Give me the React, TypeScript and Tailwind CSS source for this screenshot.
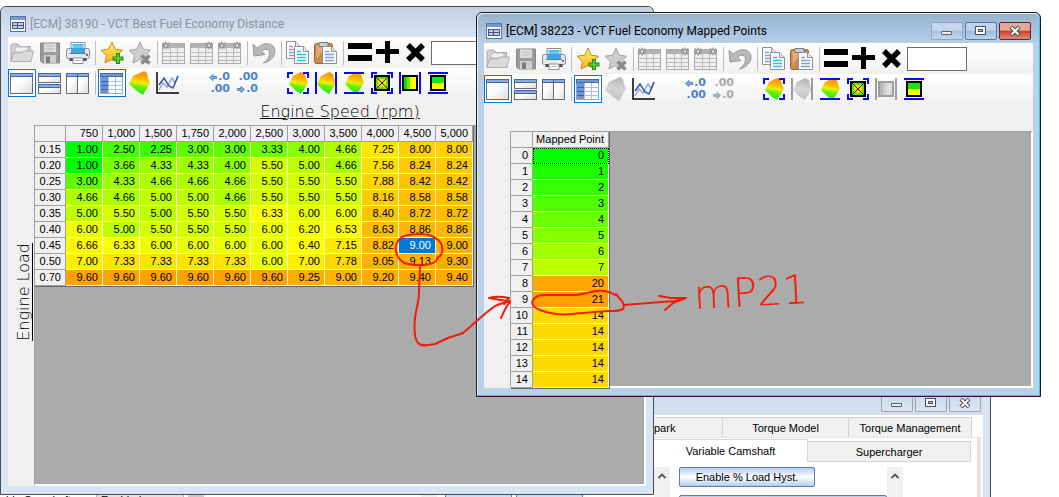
import React from "react";

type IconProps = { off?: boolean };

const Svg = ({ children }: { children: React.ReactNode }) => (
  <svg width="24" height="24" viewBox="0 0 24 24" className="block" aria-hidden="true">
    {children}
  </svg>
);

const SharedPaint = () => (
  <svg width="0" height="0" className="absolute" aria-hidden="true">
    <defs>
      <linearGradient id="heat" x1="0.6" y1="0" x2="0.45" y2="1">
        <stop offset="0" stopColor="#ff8c00" />
        <stop offset="0.3" stopColor="#ffb400" />
        <stop offset="0.5" stopColor="#e8f000" />
        <stop offset="0.65" stopColor="#6cf000" />
        <stop offset="1" stopColor="#1ee61e" />
      </linearGradient>
      <linearGradient id="ash" x1="0.6" y1="0" x2="0.45" y2="1">
        <stop offset="0" stopColor="#b4b4b4" />
        <stop offset="0.5" stopColor="#d6d6d6" />
        <stop offset="1" stopColor="#bdbdbd" />
      </linearGradient>
      <linearGradient id="gold" x1="0" y1="0" x2="0" y2="1">
        <stop offset="0" stopColor="#fff06a" />
        <stop offset="1" stopColor="#f5b515" />
      </linearGradient>
      <linearGradient id="pane" x1="0" y1="0" x2="1" y2="1">
        <stop offset="0.4" stopColor="#ffffff" />
        <stop offset="1" stopColor="#dcdcdc" />
      </linearGradient>
    </defs>
  </svg>
);

const OpenIcon = () => (
  <Svg>
    <path d="M1 20V4.500Q1 3 2.500 3H8l2 2.500h10.500V10" fill="#d2d2d2" stroke="#a9a9a9" />
    <path d="M5 6h13v5H5z" fill="#f2f2f2" stroke="#b9b9b9" />
    <path d="M1 20.500 3.500 12h8l2-2h10l-2.500 10.500z" fill="#dadada" stroke="#adadad" />
  </Svg>
);

const SaveIcon = () => (
  <Svg>
    <path d="M2.500 2h19v20h-17l-2-2z" fill="#9b9b9b" stroke="#8a8a8a" />
    <rect x="6" y="2.500" width="12" height="8.500" fill="#dedede" />
    <path d="M7.500 5h9M7.500 8h9" stroke="#bdbdbd" />
    <rect x="6" y="14" width="12" height="8" fill="#cfcfcf" />
    <rect x="8" y="15.500" width="4" height="6.500" fill="#7c7c7c" />
  </Svg>
);

const PrintIcon = () => (
  <Svg>
    <path d="M5 8V1.500h14V8" fill="#fff" stroke="#8f8f8f" />
    <path d="M6.500 3h11v6h-11z" fill="#41b4ea" />
    <path d="M6.500 5h11M6.500 7h11" stroke="#8bdcff" />
    <rect x="0.500" y="7.500" width="23" height="10" rx="2" fill="#e4e7ee" stroke="#85879a" />
    <path d="M5 7.500h14v5H5z" fill="#35a9e2" />
    <path d="M4 12.500h16" stroke="#5577a0" />
    <path d="M4 17h16l1 3H3z" fill="#4e5361" />
    <path d="M7 17h10v5.500H7z" fill="#fff" stroke="#8c8c8c" />
    <path d="M9 19.500h6" stroke="#b5b5b5" />
    <rect x="20" y="13" width="2" height="2" fill="#e04b2f" />
  </Svg>
);

const StarIcon = ({ off }: IconProps) => (
  <Svg>
    <path
      d="M12 1l3.200 7.200 7.300 1-5.200 5.300 1.200 7.500L12 18.500 5 22l1.400-7.500L1 9.200l7.600-1z"
      fill={off ? "#cdcdcd" : "url(#gold)"}
      stroke={off ? "#a5a5a5" : "#d08b12"}
      strokeLinejoin="round"
    />
    {off ? (
      <path d="M13.500 14.500l8 8M21.500 14.500l-8 8" stroke="#8a8a8a" strokeWidth="3.500" />
    ) : (
      <>
        <path d="M18 12v11M12.500 17.500h11" stroke="#1f8a1a" strokeWidth="4" />
        <path d="M18 13v9M13.500 17.500h9" stroke="#5ccb35" strokeWidth="2" />
      </>
    )}
  </Svg>
);

const GridIcon = ({ marks }: { marks: number[] }) => (
  <Svg>
    <rect x="0.500" y="2.500" width="22" height="20" fill="#efefef" stroke="#ababab" />
    <rect x="1" y="3" width="21" height="4" fill="#b3b3b3" />
    <path d="M1 11.500h21M1 15.500h21M1 19.500h21M8.500 7v15M15.500 7v15" stroke="#bcbcbc" />
    {marks.map((x) => (
      <g key={x}>
        <path
          d={`M${x - 4} 4.500h8M${x} 0.500v8M${x - 3} 1.500l6 6M${x + 3} 1.500l-6 6`}
          stroke="#979797"
          strokeWidth="1.300"
        />
        <rect x={x - 1} y="3.500" width="2" height="2" fill="#e8e8e8" />
      </g>
    ))}
  </Svg>
);

const UndoIcon = () => (
  <Svg>
    <path
      d="M1 3.500l1 11.500 11-1.500-3.500-3C13 7 17.500 7.500 17.500 12c0 4-2 7-6 10 7-1.500 11.500-6.500 11.500-12C23 2.500 13-.5 5.500 7z"
      fill="#b9b9b9"
      stroke="#979797"
    />
  </Svg>
);

const Page = ({ x, y, line }: { x: number; y: number; line: string }) => (
  <g transform={`translate(${x} ${y})`}>
    <path d="M0.500 0.500h9l5 5v12h-14z" fill="#fff" stroke="#8f8f8f" />
    <path d="M9.500 0.500v5h5" fill="#e5e5e5" stroke="#8f8f8f" />
    <path d="M3 5.500h4M3 8.500h9M3 11.500h9M3 14.500h9" stroke={line} strokeWidth="1.500" />
  </g>
);

const CopyIcon = () => (
  <Svg>
    <Page x={0} y={0} line="#7f9fd6" />
    <Page x={8} y={5} line="#22c3e6" />
  </Svg>
);

const PasteIcon = () => (
  <Svg>
    <rect x="0.500" y="2.500" width="18" height="20" rx="2" fill="#c98a4b" stroke="#9a6434" />
    <path d="M2.500 18l9-12v-2h-9z" fill="#e0ad74" />
    <path d="M5 1.500h9v4H5z" fill="#cfcfcf" stroke="#777" />
    <Page x={8} y={5} line="#7f9fd6" />
  </Svg>
);

const EqualsIcon = () => (
  <Svg>
    <path d="M0 2h24v6H0zM0 14h24v6H0z" fill="#000" />
  </Svg>
);
const PlusIcon = () => (
  <Svg>
    <path d="M9 0h5v8h9v5h-9v9H9v-9H0V8h9z" fill="#000" />
  </Svg>
);
const TimesIcon = () => (
  <Svg>
    <path d="M4 4l15 15M19 4L4 19" stroke="#000" strokeWidth="5.500" />
  </Svg>
);

const Frame = ({ x, y, w, h }: { x: number; y: number; w: number; h: number }) => (
  <g>
    <rect x={x + 0.5} y={y + 0.5} width={w - 1} height={h - 1} fill="url(#pane)" stroke="#6b6b6b" />
    <rect x={x} y={y} width={w} height="4" fill="#4467ad" />
    <rect x={x + 1} y={y + 1} width={w - 2} height="2" fill="#8caade" />
  </g>
);

const SingleIcon = () => (
  <Svg>
    <Frame x={0} y={2} w={23} h={21} />
  </Svg>
);
const RowsIcon = () => (
  <Svg>
    <Frame x={0} y={2} w={23} h={10} />
    <Frame x={0} y={13} w={23} h={10} />
  </Svg>
);
const ColumnsIcon = () => (
  <Svg>
    <Frame x={0} y={2} w={12} h={21} />
    <Frame x={11} y={2} w={12} h={21} />
  </Svg>
);

const TableIcon = () => (
  <Svg>
    <rect x="0.500" y="2.500" width="22" height="20" fill="#fff" stroke="#8fa6d0" />
    <rect x="0" y="2" width="23" height="4" fill="#4467ad" />
    <rect x="1" y="3" width="21" height="2" fill="#7295d0" />
    <rect x="1" y="6" width="7" height="16" fill="#6e93d2" />
    <path d="M1 10.500h22M1 14.500h22M1 18.500h22M8.500 6v16M15.500 6v16" stroke="#a9bde0" />
    <path d="M1 10.500h7M1 14.500h7M1 18.500h7" stroke="#3c5fa6" />
  </Svg>
);

const SurfaceIcon = ({ off }: IconProps) => (
  <Svg>
    <path d="M16 0l3 2 1 5 2 5-7 12-6-4-8-7 4-8z" fill={off ? "url(#ash)" : "url(#heat)"} />
  </Svg>
);

const ChartIcon = () => (
  <Svg>
    <path d="M1 1v21h22" fill="none" stroke="#000" strokeWidth="1.500" />
    <path d="M3 19l4-7 4 4 5-9 3 5 3-7" fill="none" stroke="#8ea7dc" strokeWidth="1.500" />
    <path d="M3 14l5-7 5 8 4 2 5-12" fill="none" stroke="#2e56a8" strokeWidth="1.500" />
  </Svg>
);

const Arrow = ({ flip }: { flip?: boolean }) => (
  <svg width="8" height="7" viewBox="0 0 8 7" className={flip ? "rotate-180" : ""} aria-hidden="true">
    <path d="M0.500 2.500h3.500V0.500l3.500 3-3.500 3v-2H0.500z" fill="#8db3e2" stroke="currentColor" />
  </svg>
);

const DecimalIcon = ({ more, off }: { more: boolean; off?: boolean }) => (
  <span
    className={
      "flex w-6 flex-col font-['DejaVu_Sans',sans-serif] text-[11px] leading-[12px] font-bold " +
      (off ? "text-[#a8a8a8]" : "text-[#4a83cb]")
    }
  >
    <span className="flex items-center justify-end gap-px">
      {more && <Arrow flip />}
      {more ? ".0" : ".00"}
    </span>
    <span className="flex items-center justify-end gap-px">
      {!more && <Arrow />}
      {more ? ".00" : ".0"}
    </span>
  </span>
);

type Edge = "corners" | "sides" | "ends";
const edgePath: Record<Edge, string> = {
  corners: "M2 7V2h5M17 2h5v5M22 17v5h-5M7 22H2v-5",
  sides: "M2 1v22M22 1v22",
  ends: "M2 2h20M2 22h20",
};

const FitSurfaceIcon = ({ edge, off }: { edge: Edge; off?: boolean }) => (
  <Svg>
    <path d="M15 1l4 2 1 4 2 5-7 11-5-3-7-7 4-8z" fill={off ? "url(#ash)" : "url(#heat)"} />
    <path d={edgePath[edge]} fill="none" stroke={off ? "#9d9d9d" : "#0a0aff"} strokeWidth="2" />
  </Svg>
);

const FitCellIcon = ({ edge, off }: { edge: Edge; off?: boolean }) => {
  const ink = off ? "#9d9d9d" : "#000";
  return (
    <Svg>
      <rect x="5" y="5" width="14" height="14" fill={off ? "#dedede" : edge === "corners" ? "#5ce600" : "#ffff00"} />
      {edge === "corners" && (
        <>
          <rect x="8" y="8" width="8" height="8" fill="#ffd800" />
          <path d="M6 6l12 12M18 6L6 18" stroke="#222" />
        </>
      )}
      {edge === "sides" && (
        <>
          <rect x="5" y="5" width="4" height="14" fill={off ? "#b8b8b8" : "#12d812"} />
          <rect x="9" y="5" width="3" height="14" fill={off ? "#cdcdcd" : "#6cf000"} />
        </>
      )}
      {edge === "ends" && <rect x="5" y="5" width="14" height="7" fill="#12e812" />}
      <rect x="5" y="5" width="14" height="14" fill="none" stroke={ink} strokeWidth="2" />
      <path d={edgePath[edge]} fill="none" stroke={off ? "#9d9d9d" : "#0a0aff"} strokeWidth="2" />
    </Svg>
  );
};

const Tool = ({ label, active, children }: { label: string; active?: boolean; children: React.ReactNode }) => (
  <button
    type="button"
    aria-label={label}
    className={
      "flex h-7 w-7 shrink-0 items-center justify-center " +
      (active ? "border border-[#0078d7] bg-white" : "")
    }
  >
    {children}
  </button>
);

const Divider = () => (
  <span className="flex w-1.5 shrink-0 justify-center">
    <span className="h-6 w-px bg-[#bdbdbd]" />
  </span>
);

const bar = "flex items-center overflow-hidden rounded-r-sm bg-linear-to-b from-[#fefefe] to-[#f1f1f1]";

const Toolbars = ({ name, mapped }: { name: string; mapped?: boolean }) => (
  <div>
    <div className={bar + " h-[31px]"}>
      <Tool label="Open"><OpenIcon /></Tool>
      <Tool label="Save"><SaveIcon /></Tool>
      <Tool label="Print"><PrintIcon /></Tool>
      <Divider />
      <Tool label="Add favorite"><StarIcon /></Tool>
      <Tool label="Remove favorite"><StarIcon off /></Tool>
      <Divider />
      <Tool label="Insert left"><GridIcon marks={[4]} /></Tool>
      <Tool label="Insert right"><GridIcon marks={[19]} /></Tool>
      <Tool label="Insert both"><GridIcon marks={[4, 19]} /></Tool>
      <Divider />
      <Tool label="Undo"><UndoIcon /></Tool>
      <Divider />
      <Tool label="Copy"><CopyIcon /></Tool>
      <Tool label="Paste"><PasteIcon /></Tool>
      <Divider />
      <Tool label="Set value"><EqualsIcon /></Tool>
      <Tool label="Add value"><PlusIcon /></Tool>
      <Tool label="Multiply value"><TimesIcon /></Tool>
      <input
        aria-label={name + " value"}
        className="ml-px h-6 w-[60px] shrink-0 border border-[#6b6b6b] bg-white px-1 text-[11px] outline-none"
      />
    </div>
    <div className={bar + " h-[30px]"}>
      <Tool label="Single view" active><SingleIcon /></Tool>
      <Tool label="Split rows"><RowsIcon /></Tool>
      <Tool label="Split columns"><ColumnsIcon /></Tool>
      <Divider />
      <Tool label="Table" active><TableIcon /></Tool>
      <Tool label="Surface"><SurfaceIcon off={mapped} /></Tool>
      <Tool label="Chart"><ChartIcon /></Tool>
      <div className="ml-[22px] flex">
        <Tool label="More decimals"><DecimalIcon more /></Tool>
        <Tool label="Fewer decimals"><DecimalIcon more={false} off={mapped} /></Tool>
      </div>
      <div className="ml-6 flex">
        <Tool label="Fit surface"><FitSurfaceIcon edge="corners" /></Tool>
        <Tool label="Fit surface width"><FitSurfaceIcon edge="sides" off={mapped} /></Tool>
        <Tool label="Fit surface height"><FitSurfaceIcon edge="ends" /></Tool>
        <Tool label="Fit table"><FitCellIcon edge="corners" /></Tool>
        <Tool label="Fit table width"><FitCellIcon edge="sides" off={mapped} /></Tool>
        <Tool label="Fit table height"><FitCellIcon edge="ends" /></Tool>
      </div>
    </div>
  </div>
);

const AppIcon = () => (
  <svg width="16" height="16" viewBox="0 0 16 16" className="shrink-0" aria-hidden="true">
    <rect x="0.500" y="0.500" width="15" height="15" fill="#f6f8fc" stroke="#5f7396" />
    <rect x="1" y="1" width="14" height="3" fill="#6f9bdc" />
    <path d="M2 6h12v7H2z" fill="#45557c" />
    <path d="M3 7h4v2H3zM8 7h5v2H8zM3 10h4v2H3zM8 10h5v2H8z" fill="#b9cdf0" />
  </svg>
);

const captionTone = {
  close: "border-[#5a2a26] bg-linear-to-b from-[#e5a99c] from-45% via-[#cf3b22] via-50% to-[#dd8a76]",
  strong: "border-[#5a76a5] bg-linear-to-b from-[#bfd4ec] from-45% via-[#9cbbdd] via-50% to-[#bcd5ef]",
  soft: "border-[#92a4be] bg-linear-to-b from-[#c5d7ec] from-45% via-[#a9c3e0] via-50% to-[#c0d6ee]",
  idle: "border-[#9aa3ae] bg-linear-to-b from-[#cbd9ea] to-[#dbe6f3]",
};

const Caption = ({ kind, tone }: { kind: "min" | "max" | "close"; tone: keyof typeof captionTone }) => (
  <button
    type="button"
    aria-label={kind}
    className={"flex h-[18px] w-8 items-center justify-center rounded-[2px] border " + captionTone[tone]}
  >
    <svg width="12" height="10" viewBox="0 0 12 10" aria-hidden="true">
      {kind === "min" && <rect x="0.500" y="5.500" width="10" height="3" rx="0.500" fill="#eee" stroke="#555f6b" />}
      {kind === "max" && (
        <>
          <rect x="0.500" y="0.500" width="10" height="8" fill="#fff" stroke="#454f5e" />
          <rect x="3.500" y="3.500" width="4" height="2" fill="#b4cbe6" stroke="#454f5e" />
        </>
      )}
      {kind === "close" && (
        <>
          <path d="M2 1l8 8M10 1L2 9" stroke="#4a4a50" strokeWidth="4" />
          <path d="M2.500 1.500l7 7M9.500 1.500l-7 7" stroke="#fff" strokeWidth="2" />
        </>
      )}
    </svg>
  </button>
);

const ramp = (value: number, low: number, mid: number, slope: number) =>
  value <= mid
    ? `rgb(${Math.round(((value - low) / (mid - low)) * 255)} 255 0)`
    : `rgb(255 ${Math.round(255 - (value - mid) * slope)} 0)`;

const speeds = ["750", "1,000", "1,500", "1,750", "2,000", "2,500", "3,000", "3,500", "4,000", "4,500", "5,000"];
const loads: [string, string][] = [
  ["0.15", "1.00 2.50 2.25 3.00 3.00 3.33 4.00 4.66 7.25 8.00 8.00"],
  ["0.20", "1.00 3.66 4.33 4.33 4.00 5.50 5.00 4.66 7.56 8.24 8.24"],
  ["0.25", "3.00 4.33 4.66 4.66 4.66 5.50 5.50 5.50 7.88 8.42 8.42"],
  ["0.30", "4.66 4.66 5.00 5.00 4.66 5.50 5.50 5.50 8.16 8.58 8.58"],
  ["0.35", "5.00 5.50 5.00 5.50 5.50 6.33 6.00 6.00 8.40 8.72 8.72"],
  ["0.40", "6.00 5.00 5.50 5.50 5.50 6.00 6.20 6.53 8.63 8.86 8.86"],
  ["0.45", "6.66 6.33 6.00 6.00 6.00 6.00 6.40 7.15 8.82 9.00 9.00"],
  ["0.50", "7.00 7.33 7.33 7.33 7.33 6.00 7.00 7.78 9.05 9.13 9.30"],
  ["0.70", "9.60 9.60 9.60 9.60 9.60 9.60 9.25 9.00 9.20 9.40 9.40"],
];
const points = [0, 1, 2, 3, 4, 5, 6, 7, 20, 21, 14, 14, 14, 14, 14];

const head = "h-4 border-r border-b border-[#a0a0a0] bg-[#f0f0f0] p-0 pr-1 text-right font-normal";
const cell = "h-4 border-r border-b border-[#f4f4d8] p-0 pr-1 text-right";
const grid =
  "table-fixed border-separate border-spacing-0 border-r border-b border-r-[#696969] border-b-[#696969] text-[11px] leading-[15px]";

const EconomyWindow = () => (
  <section className="absolute top-1.5 left-0 flex h-[489px] w-[654px] flex-col rounded-t-md border border-[#4a4a50] bg-[#d7e4f2] px-[7px] pb-2">
    <header className="-mx-[7px] flex h-[30px] shrink-0 items-center gap-1 rounded-t-md bg-linear-to-b from-[#c2d1e3] to-[#d7e4f2] px-[9px] pt-1">
      <AppIcon />
      <h2 className="font-['Roboto',sans-serif] text-[12px] text-[#8d949c]">
        [ECM] 38190 - VCT Best Fuel Economy Distance
      </h2>
    </header>
    <div className="flex min-h-0 grow flex-col bg-[#f0f0f0]">
      <Toolbars name="Distance" />
      <div className="flex min-h-0 grow">
        <div className="flex w-[26px] shrink-0 items-center justify-end">
          <span className="rotate-180 font-['DejaVu_Sans',sans-serif] text-[16px] leading-5 font-extralight underline [writing-mode:vertical-rl]">
            Engine Load
          </span>
        </div>
        <div className="flex min-w-0 grow flex-col">
          <h3 className="flex h-[27px] shrink-0 items-center justify-center font-['DejaVu_Sans',sans-serif] text-[16px] leading-6 font-extralight underline">
            Engine Speed (rpm)
          </h3>
          <div className="min-h-0 grow border-t border-l border-r-2 border-b-2 border-t-[#a0a0a0] border-r-white border-b-white border-l-[#a0a0a0] bg-[#ababab]">
            <table className={grid + " w-[439px]"}>
              <thead>
                <tr>
                  <th className={head + " w-[31px]"} aria-label="Engine load" />
                  {speeds.map((s) => (
                    <th key={s} className={head}>{s}</th>
                  ))}
                </tr>
              </thead>
              <tbody>
                {loads.map(([load, row]) => (
                  <tr key={load}>
                    <th className={head}>{load}</th>
                    {row.split(" ").map((v, i) => {
                      const selected = load === "0.45" && i === 9;
                      return (
                        <td
                          key={i}
                          className={cell + (selected ? " text-white" : "")}
                          style={{ backgroundColor: selected ? "#0078d7" : ramp(Number(v), 1, 6.4, 29) }}
                        >
                          {v}
                        </td>
                      );
                    })}
                  </tr>
                ))}
              </tbody>
            </table>
          </div>
        </div>
      </div>
    </div>
  </section>
);

const PointsWindow = () => (
  <section className="absolute top-3 left-[476px] flex h-[385px] w-[565px] flex-col rounded-t-md border border-[#1b1b22] bg-[#b9d1ea] px-[7px] pb-2 shadow-[inset_-1px_-1px_0_#3cc4e0,inset_1px_1px_0_#e6eff8]">
    <header className="mx-[-6px] mt-px flex h-[29px] shrink-0 items-center gap-1 rounded-t-md bg-linear-to-b from-[#97b2d0] to-[#b7cfe8] pt-1 pr-2 pl-2">
      <AppIcon />
      <h2 className="grow font-['Roboto',sans-serif] text-[12px] text-black">
        [ECM] 38223 - VCT Fuel Economy Mapped Points
      </h2>
      <div className="flex gap-0.5">
        <Caption kind="min" tone="soft" />
        <Caption kind="max" tone="strong" />
        <Caption kind="close" tone="close" />
      </div>
    </header>
    <div className="flex min-h-0 grow flex-col bg-[#f0f0f0]">
      <Toolbars name="Mapped point" mapped />
      <div className="mt-[27px] ml-[26px] min-h-0 grow border-t border-l border-r-2 border-b-2 border-t-[#a0a0a0] border-r-white border-b-white border-l-[#a0a0a0] bg-[#ababab]">
        <table className={grid + " w-[99px]"}>
          <thead>
            <tr>
              <th className={head + " w-[22px]"} aria-label="Index" />
              <th className={head}>Mapped Point</th>
            </tr>
          </thead>
          <tbody>
            {points.map((p, i) => (
              <tr key={i}>
                <th className={head}>{i}</th>
                <td
                  className={cell + (i === 0 ? " outline-1 -outline-offset-1 outline-black outline-dotted" : "")}
                  style={{ backgroundColor: ramp(p, 0, 9.5, 8.3) }}
                >
                  {p}
                </td>
              </tr>
            ))}
          </tbody>
        </table>
      </div>
    </div>
  </section>
);

const ScrollTop = () => (
  <div className="flex h-10 w-4 shrink-0 justify-center bg-[#f0f0f0] pt-1.5">
    <svg width="8" height="6" viewBox="0 0 8 6" aria-hidden="true">
      <path d="M0.500 5L4 1.500 7.500 5" fill="none" stroke="#505050" strokeWidth="1.800" />
    </svg>
  </div>
);

const tab = "flex items-center justify-center border-t border-r border-[#d5d5d5]";
const blueButton = "rounded-[2px] border border-[#5b7bb5] bg-linear-to-b from-[#b5cdec] via-white to-[#b5cdec]";

const EditorWindow = () => (
  <section className="absolute top-96 left-0 flex h-40 w-[991px] flex-col border-r border-[#4a4a50] bg-[#d7e4f2] pr-[7px]">
    <header className="flex h-[31px] shrink-0 items-end justify-end gap-0.5 bg-[#d0deed] pr-[2px] pb-[3px]">
      <Caption kind="min" tone="idle" />
      <Caption kind="max" tone="idle" />
      <Caption kind="close" tone="idle" />
    </header>
    <div className="flex min-h-0 grow bg-white pt-0.5 text-[11px]">
      <div className="flex w-[654px] shrink-0 items-start gap-1 pt-[75px] leading-4">
        <label htmlFor="camshaft" className="w-[92px] shrink-0 overflow-hidden whitespace-nowrap">
          able Camshaft
        </label>
        <select id="camshaft" className="h-4 w-[88px] border border-[#b5b5b5] bg-[#e4e4e4]">
          <option>Enabled</option>
        </select>
        <span className="h-5 w-4 bg-[#c9c9c9]" />
        <span className="grow" />
        <span className="h-5 w-4 bg-[#f0f0f0]" />
        <button type="button" aria-label="Intake" className={blueButton + " ml-1 h-5 w-[67px]"} />
        <button type="button" aria-label="Exhaust" className={blueButton + " mr-[71px] h-5 w-[67px]"} />
      </div>
      <div className="flex min-w-0 grow flex-col">
        <nav className="flex h-5 shrink-0 pr-[11px] leading-4">
          <button type="button" className={tab + " w-[69px] justify-start bg-[#f0f0f0]"}>park</button>
          <button type="button" className={tab + " w-[126px] bg-[#f0f0f0]"}>Torque Model</button>
          <button type="button" className={tab + " grow bg-[#f0f0f0]"}>Torque Management</button>
        </nav>
        <div className="mr-0.5 flex min-h-0 grow flex-col border-t border-r-4 border-[#e6e6e6] pt-px">
          <nav className="flex shrink-0 items-end pr-1.5 leading-4">
            <button type="button" className={tab + " h-[23px] w-[154px] bg-white"}>Variable Camshaft</button>
            <button type="button" className={tab + " h-[21px] grow border-b bg-[#f0f0f0]"}>Supercharger</button>
          </nav>
          <div className="flex min-h-0 grow items-start pt-[5px]">
            <ScrollTop />
            <div className="ml-[9px] flex w-[208px] shrink-0 flex-col items-start gap-2">
              <button type="button" className={blueButton + " h-5 w-[136px] leading-4"}>
                Enable % Load Hyst.
              </button>
              <button type="button" aria-label="Camshaft table" className={blueButton + " h-5 w-full"} />
            </div>
            <ScrollTop />
          </div>
        </div>
      </div>
    </div>
  </section>
);

const Annotations = () => (
  <>
    <svg
      width="1059"
      height="497"
      viewBox="0 0 1059 497"
      className="pointer-events-none absolute top-0 left-0"
      fill="none"
      stroke="#f51a0a"
      strokeWidth="2"
      strokeLinecap="round"
      strokeLinejoin="round"
      aria-hidden="true"
    >
      <path d="M404 236C397 240 395 246 396 251c1 7 6 12 12 13 8 2 20 2 27-2 3-2 1-5 5-6 4-4 3-12-2-16-6-6-18-7-30-5-5 1-8 3-10 6" />
      <path d="M420 265c0 9-1 18-1 27 0 10-3 17-4 26-1 10-1 20 3 25 5 5 12 1 17 1l13-6 15-5 24-21 8-6 5-2 10-3" />
      <path d="M489 298c7-2 15-1 20 0l-5 6M489 298l18 3 3 1c-4 4-6 10-9 16" />
      <path d="M615 295c-5-3-10-5-18-4-8 1-14 3-21 4l-28 0c-5 0-11-1-15 5-3 6 4 9 10 11 9 3 19 4 29 3 12-1 22-2 36-3 6 0 9 1 15-2 2-2 0-6-1-8-3-2-4-5-6-7" />
      <path d="M624 305l25-2 26-2 11-3M659 296l12 2 15 0M686 298l-13 5-8 7" />
    </svg>
    <span className="pointer-events-none absolute top-[268px] left-[694px] -rotate-3 font-['DejaVu_Sans',sans-serif] text-[40px] leading-[48px] font-extralight text-[#f51a0a]">
      mP21
    </span>
  </>
);

export default function App() {
  return (
    <main className="relative h-screen overflow-hidden bg-white font-['Liberation_Sans',Arial,sans-serif] text-black">
      <SharedPaint />
      <EditorWindow />
      <EconomyWindow />
      <PointsWindow />
      <Annotations />
    </main>
  );
}
